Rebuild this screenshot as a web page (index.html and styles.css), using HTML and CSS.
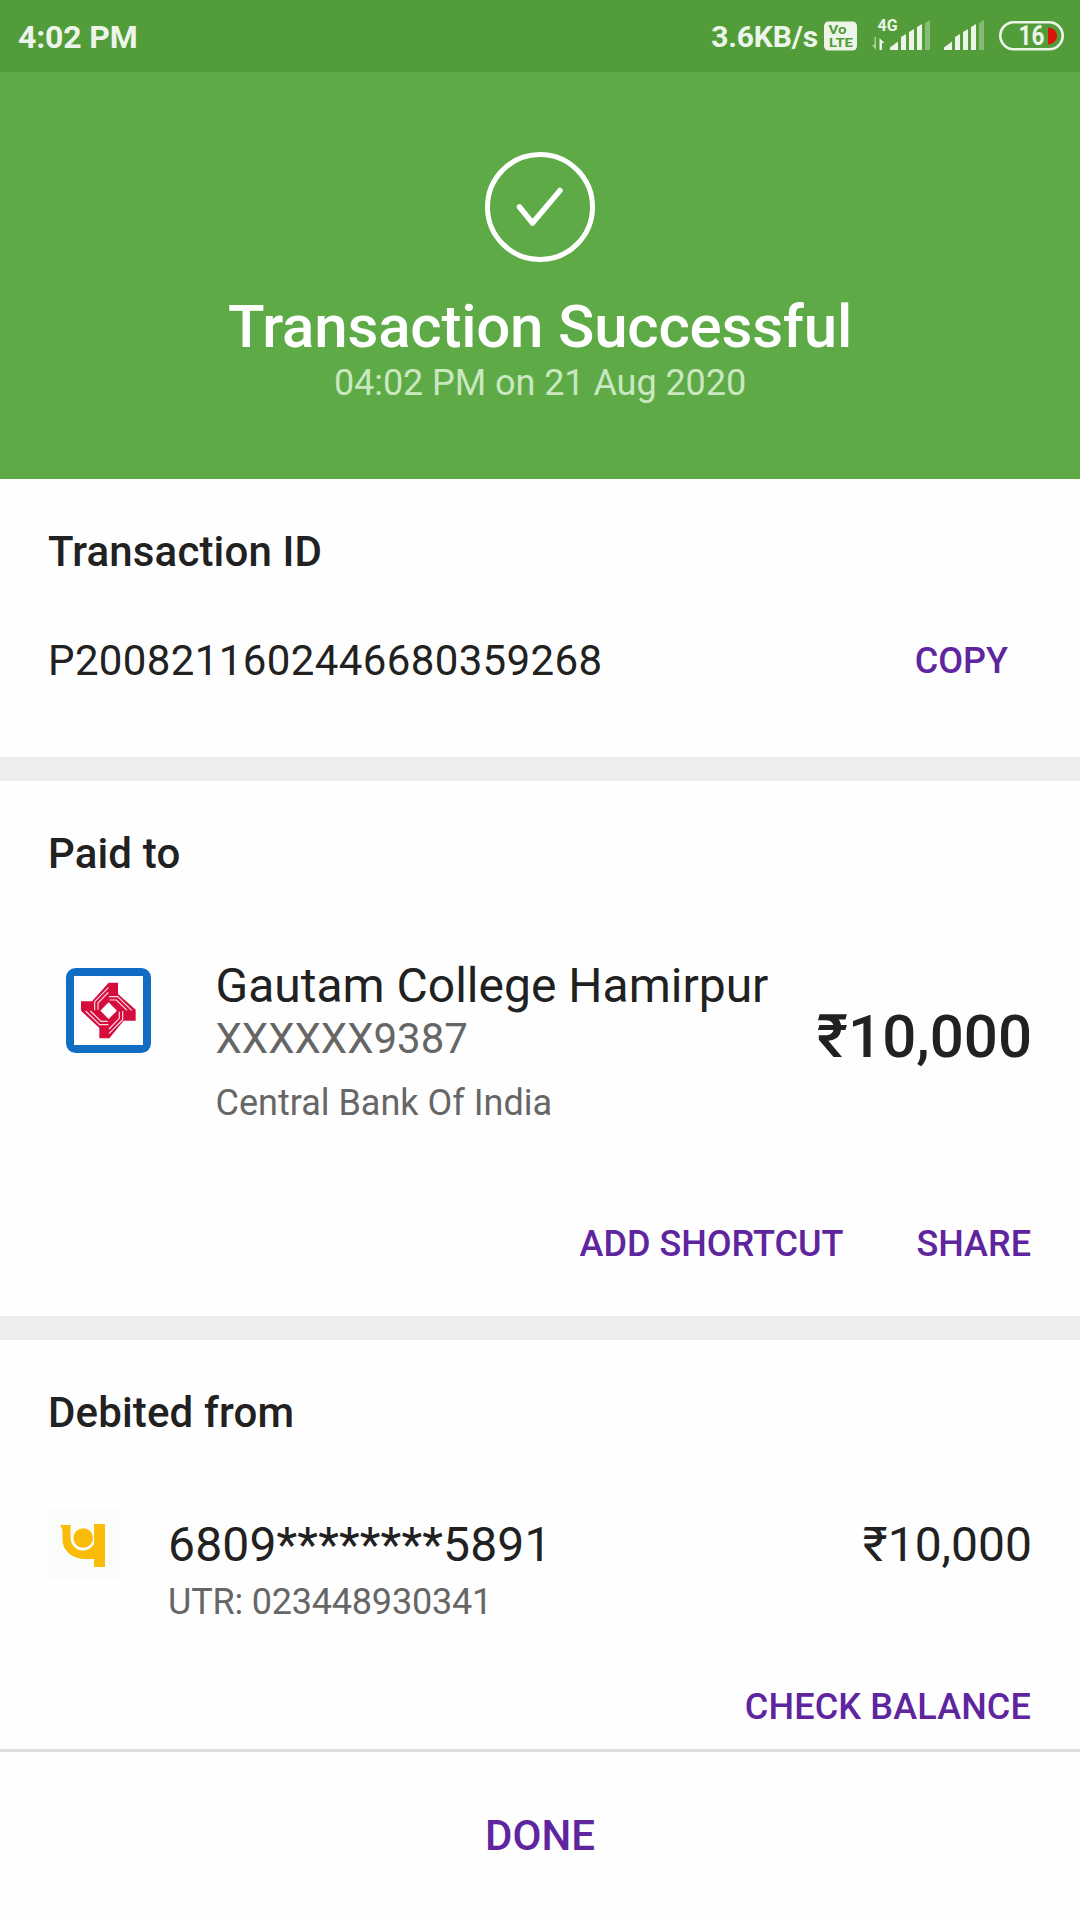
FILE: index.html
```html
<!DOCTYPE html>
<html lang="en">
<head>
<meta charset="utf-8">
<title>Transaction Successful</title>
<link rel="stylesheet" href="styles.css">
</head>
<body>
<div class="status-bar">
  <span class="clock">4:02 PM</span>
  <div class="indicators">
    <span class="speed">3.6KB/s</span>
    <svg class="volte" width="33" height="30" viewBox="0 0 33 30">
      <rect width="33" height="29" y=".5" rx="4.5" fill="#edf5ea"/>
      <text x="4.5" y="13" class="volte-text" textLength="18" lengthAdjust="spacingAndGlyphs">Vo</text>
      <text x="5" y="25.5" class="volte-text" textLength="24" lengthAdjust="spacingAndGlyphs">LTE</text>
    </svg>
    <svg class="network" width="59" height="32" viewBox="0 0 59 32" fill="#edf5ea">
      <text x="6.5" y="12" class="network-text" textLength="20" lengthAdjust="spacingAndGlyphs">4G</text>
      <path d="M1 26l4 5v-13h-1.5v8z" opacity=".6"/>
      <path d="M8.500 31v-12l5 5h-2.500v7z"/>
      <path d="M19 31v-2.500l8-6v8.500zM30 18l5-3v16h-5zM38 13l5-3v21h-5zM46 8l5-3v26h-5z"/>
      <path d="M54 4l5-3v30h-5z" opacity=".35"/>
    </svg>
    <svg class="signal" width="40" height="32" viewBox="0 0 40 32" fill="#edf5ea">
      <path d="M0 31v-2.500l8-6v8.500zM11 18l5-3v16h-5zM19 13l5-3v21h-5zM27 8l5-3v26h-5z"/>
      <path d="M35 4l5-3v30h-5z" opacity=".35"/>
    </svg>
    <svg class="battery" width="65" height="30" viewBox="0 0 65 30">
      <rect x="1.300" y="1.300" width="62.400" height="27" rx="13.500" fill="none" stroke="#edf5ea" stroke-width="2.600"/>
      <path d="M49 6.500c5 0 9 4 9 8.500s-4 8.500-9 8.500z" fill="#d9140a"/>
      <text x="19.500" y="24" class="battery-text" textLength="26" lengthAdjust="spacingAndGlyphs">16</text>
    </svg>
  </div>
</div>

<header class="hero">
  <svg width="110" height="110" viewBox="0 0 110 110" fill="none" stroke="#fff">
    <circle cx="55" cy="55" r="52.500" stroke-width="5"/>
    <path d="M34.500 55l13 16L75 38.500" stroke-width="5.500" stroke-linecap="round" stroke-linejoin="round"/>
  </svg>
  <h1>Transaction Successful</h1>
  <p>04:02 PM on 21 Aug 2020</p>
</header>

<section class="card card-id">
  <h2>Transaction ID</h2>
  <div class="id-row">
    <span class="id">P2008211602446680359268</span>
    <a class="action">COPY</a>
  </div>
</section>

<section class="card card-paid">
  <h2>Paid to</h2>
  <div class="payee">
    <svg class="payee-logo" width="85" height="85" viewBox="77 82 255 255">
      <rect x="89" y="94" width="231" height="231" rx="17" fill="#fff" stroke="#116cc4" stroke-width="24"/>
      <rect x="101" y="106" width="207" height="207" fill="#fff"/>
      <path fill="#d40d3c" d="M205 126h28v34l53 47v33h-36l-43 53h-30v-31l-55-52v-28h33z"/>
      <path fill="#fff" d="M205 185l25 25-25 25-25-25z"/>
      <g fill="none" stroke="#fbdde4" stroke-width="3.500">
        <path id="strand" d="M163 209v-26l41-42M173 207v-20l31-32"/>
        <use href="#strand" transform="rotate(90 205 210)"/>
        <use href="#strand" transform="rotate(180 205 210)"/>
        <use href="#strand" transform="rotate(270 205 210)"/>
      </g>
    </svg>
    <div class="payee-info">
      <div class="payee-name">Gautam College Hamirpur</div>
      <div class="payee-account">XXXXXX9387</div>
      <div class="payee-bank">Central Bank Of India</div>
    </div>
    <div class="payee-amount">₹10,000</div>
  </div>
  <div class="actions">
    <a class="action">ADD SHORTCUT</a>
    <a class="action">SHARE</a>
  </div>
</section>

<section class="card card-debit">
  <h2>Debited from</h2>
  <div class="debit">
    <svg class="debit-logo" width="72" height="72" viewBox="0 0 72 72">
      <rect width="72" height="72" fill="#fbfdfb"/>
      <path fill="#fbbc09" d="M12 17h10.500v13a12.500 12.500 0 0 0 23.500 6V16h11v43H46v-8H38C24 51 14.500 43 14.500 31V25c0-3-.5-5.500-2.500-8z"/>
      <circle cx="35.200" cy="30.500" r="11" fill="#fff"/>
      <circle cx="35.200" cy="30" r="9.800" fill="#fbbc09"/>
    </svg>
    <div class="debit-info">
      <div class="debit-account">6809********5891</div>
      <div class="debit-utr">UTR: 023448930341</div>
    </div>
    <div class="debit-amount">₹10,000</div>
  </div>
  <div class="actions">
    <a class="action action-balance">CHECK BALANCE</a>
  </div>
</section>

<footer class="done">DONE</footer>
</body>
</html>
```
FILE: styles.css
```css
* {
  box-sizing: border-box;
  margin: 0;
}

body {
  width: 1080px;
  height: 1920px;
  overflow: hidden;
  display: flex;
  flex-direction: column;
  background: #fefefe;
  color: #212121;
  font-family: Roboto, sans-serif;
}

svg {
  display: block;
  flex: none;
}

.status-bar {
  height: 72px;
  padding: 0 16px 0 18px;
  display: flex;
  justify-content: space-between;
  background: #529c39;
  color: #edf5ea;
}

.clock {
  padding-top: 17px;
  font-size: 32px;
  font-weight: 700;
  line-height: 40px;
  letter-spacing: -0.15px;
}

.indicators {
  display: flex;
  align-items: flex-start;
}

.speed {
  padding-top: 17px;
  font-size: 30px;
  font-weight: 700;
  line-height: 40px;
  letter-spacing: -0.15px;
}

.volte {
  margin: 21px 14px 0 6px;
}

.volte-text {
  font: 700 13.5px Roboto, sans-serif;
  fill: #529c39;
}

.network {
  margin: 19px 14px 0 0;
}

.network-text {
  font: 700 16px Roboto, sans-serif;
}

.signal {
  margin: 19px 15px 0 0;
}

.battery {
  margin-top: 21px;
}

.battery-text {
  font: 700 27px Roboto, sans-serif;
  fill: #edf5ea;
}

.hero {
  height: 407px;
  padding-top: 80px;
  display: flex;
  flex-direction: column;
  align-items: center;
  background: #5eaa46;
  color: #fff;
}

.hero h1 {
  margin-top: 30px;
  font-size: 60px;
  font-weight: 500;
  line-height: 70px;
  letter-spacing: -0.2px;
}

.hero p {
  margin-top: -1px;
  font-size: 36px;
  line-height: 44px;
  letter-spacing: -0.06px;
  color: #cae8c0;
}

.card {
  padding: 48px 48px 0;
}

.card h2 {
  font-size: 42px;
  font-weight: 500;
  line-height: 50px;
  letter-spacing: 0.15px;
}

.card-id {
  height: 302px;
  border-bottom: 24px solid #ededed;
}

.card-paid {
  height: 559px;
  border-bottom: 24px solid #ededed;
}

.card-debit {
  height: 412px;
  border-bottom: 3px solid #dedede;
}

.action {
  font-size: 36px;
  font-weight: 500;
  line-height: 44px;
  color: #5f259f;
}

.action-balance {
  letter-spacing: 0.15px;
}

.id-row {
  margin-top: 59px;
  padding-right: 24px;
  display: flex;
  justify-content: space-between;
  align-items: center;
}

.id {
  font-size: 42px;
  line-height: 50px;
  letter-spacing: 0.38px;
}

.payee {
  margin-top: 77px;
  display: flex;
  align-items: flex-start;
}

.payee-logo {
  margin: 12px 65px 0 17.500px;
}

.payee-name {
  font-size: 48px;
  line-height: 60px;
}

.payee-account {
  margin-top: -1px;
  font-size: 42px;
  line-height: 48px;
  color: #666;
}

.payee-bank {
  margin-top: 18px;
  font-size: 36px;
  line-height: 44px;
  color: #666;
}

.payee-amount {
  margin: 46px 0 0 auto;
  font-size: 60px;
  font-weight: 500;
  line-height: 70px;
}

.actions {
  padding-right: 1px;
  display: flex;
  justify-content: flex-end;
  gap: 73px;
}

.card-paid .actions {
  margin-top: 97px;
}

.debit {
  margin-top: 70px;
  display: flex;
  align-items: flex-start;
}

.debit-logo {
  margin-right: 48px;
}

.debit-info {
  padding-top: 7px;
}

.debit-account,
.debit-amount {
  font-size: 48px;
  line-height: 60px;
}

.debit-account {
  letter-spacing: 0.15px;
}

.debit-utr {
  margin-top: 5px;
  font-size: 36px;
  line-height: 44px;
  letter-spacing: -0.2px;
  color: #666;
}

.debit-amount {
  margin: 7px 0 0 auto;
}

.card-debit .actions {
  margin-top: 61px;
}

.done {
  flex: 1;
  font-size: 42px;
  font-weight: 500;
  line-height: 168px;
  text-align: center;
  color: #5f259f;
}
```
